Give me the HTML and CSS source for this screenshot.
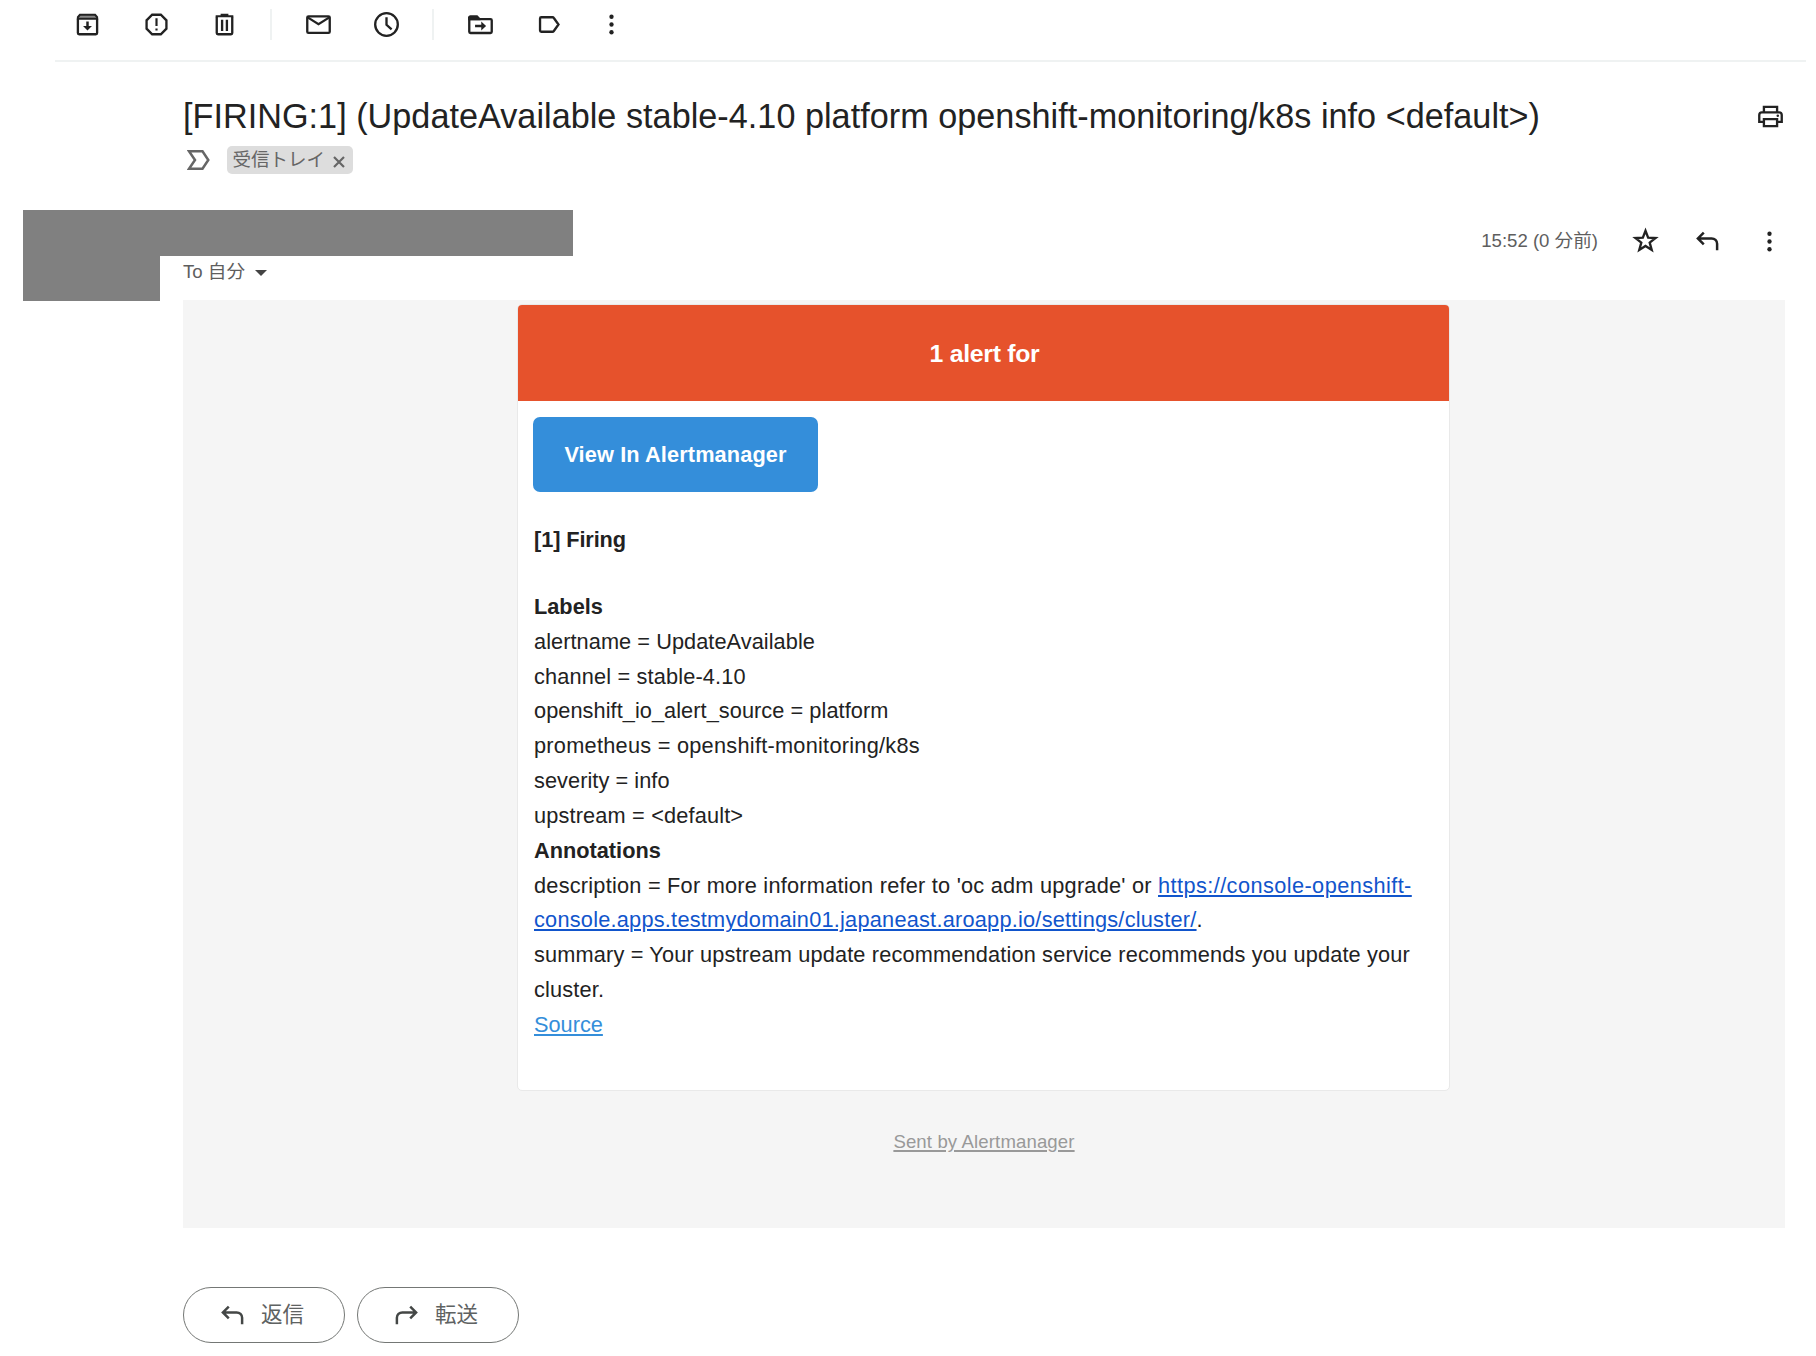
FILE: index.html
```html
<!DOCTYPE html>
<html lang="ja">
<head>
<meta charset="utf-8">
<title>[FIRING:1] UpdateAvailable</title>
<link rel="stylesheet" href="styles.css">
</head>
<body>
<svg class="defs" width="0" height="0">
  <symbol id="reply" viewBox="0 0 20 20"><path d="M7.600 4.200 3.800 8l3.800 3.800M4 8h8.700a3.500 3.500 0 0 1 3.500 3.500v4.100" fill="none" stroke="currentColor" stroke-width="1.600"/></symbol>
  <symbol id="more" viewBox="0 0 20 20"><circle cx="10" cy="5" r="1.400"/><circle cx="10" cy="10" r="1.400"/><circle cx="10" cy="15" r="1.400"/></symbol>
</svg>
<header class="toolbar">
  <svg class="icon archive" viewBox="0 0 20 20"><path d="M3.800 6.200v9.300c0 .5.300.8.800.8h10.800c.5 0 .8-.3.800-.8V6.200" class="line"/><path d="M3.800 6.300V5.200l1.300-1.500h9.800l1.300 1.500v1.100z" fill="#888" class="edge"/><path d="M9.200 8h1.600v3h2.100L10 13.900 7.100 11h2.100z"/></svg>
  <svg class="icon spam" viewBox="0 0 20 20"><path d="M7.200 3.700h5.600l3.600 3.600v5.400l-3.600 3.600H7.200l-3.600-3.600V7.300z" class="line"/><path d="M9.300 6h1.400v5H9.300zM9.300 12.500h1.400v1.400H9.300z"/></svg>
  <svg class="icon trash" viewBox="0 0 20 20"><path d="M5 5v10.500c0 .5.300.8.800.8h8.400c.5 0 .8-.3.800-.8V5" class="line"/><path d="M4.300 4H7.500V3h5v1h3.200v1.400H4.300z"/><path d="M7.700 7h1.500v7.200H7.700zM10.800 7h1.500v7.200h-1.500z"/></svg>
  <i class="divider"></i>
  <svg class="icon mail" viewBox="0 0 20 20"><rect x="2.750" y="4.750" width="14.500" height="10.700" rx=".8" class="line"/><path d="M3 5.400 10 9.800l7-4.400" class="line"/></svg>
  <svg class="icon clock" viewBox="0 0 20 20"><circle cx="10" cy="10" r="7.300" class="line"/><path d="M10 5.300V10.200l3.300 3" class="line"/></svg>
  <i class="divider"></i>
  <svg class="icon folder" viewBox="0 0 20 20"><path d="M2.750 5.200v9.500c0 .5.300.8.800.8h12.900c.5 0 .8-.3.800-.8V7.300c0-.5-.3-.8-.8-.8H2.750" class="line"/><path d="M2 5.500C2 4.600 2.600 4 3.500 4H8l2 2.200v1H2z"/><path d="M6.500 10.200h4V8.100l3.100 2.900-3.100 2.900v-2.100h-4z"/></svg>
  <svg class="icon tag" viewBox="0 0 20 20"><path d="M4.700 5.300h7.200c.4 0 .7.200.9.500l3 4.200-3 4.200c-.2.300-.5.500-.9.500H4.700c-.4 0-.8-.3-.8-.8V6.100c0-.5.400-.8.800-.8z" class="line"/></svg>
  <svg class="icon more"><use href="#more"/></svg>
</header>

<main class="thread">
  <section class="subject-row">
    <div class="subject">
      <h1>[FIRING:1] (UpdateAvailable stable-4.10 platform openshift-monitoring/k8s info &lt;default&gt;)</h1>
      <div class="tags">
        <svg class="importance" viewBox="0 0 23 20"><path d="M2 1.300h13.500L21.300 10l-5.800 8.700H2L8 10z" fill="none" stroke="#666" stroke-width="2.500"/></svg>
        <span class="chip"><span>受信トレイ</span><svg viewBox="0 0 12 12"><path d="M1 1l10 10M11 1 1 11" stroke="#666" stroke-width="2.200"/></svg></span>
      </div>
    </div>
    <svg class="icon print" viewBox="0 0 20 20"><path d="M5.750 7V3.750h8.500V7M5.500 13.500H2.750V9c0-1 .8-1.700 1.700-1.700h11.100c1 0 1.700.7 1.700 1.700v4.500H14.500M5.750 11.700h8.500v4.550h-8.500z" class="line"/><circle cx="14.700" cy="9.500" r=".8"/></svg>
  </section>

  <section class="meta">
    <div class="avatar"></div>
    <div class="from">
      <div class="name"></div>
      <div class="to"><span>To 自分</span><i class="caret"></i></div>
    </div>
    <div class="actions">
      <time>15:52 (0 分前)</time>
      <svg class="icon star" viewBox="0 0 20 20"><path d="m10 3.700 1.700 4.500 4.800.2-3.800 3 1.300 4.700L10 13.500l-4 2.600 1.300-4.700-3.800-3 4.800-.2z" class="line"/></svg>
      <svg class="icon reply"><use href="#reply"/></svg>
      <svg class="icon more"><use href="#more"/></svg>
    </div>
  </section>

  <section class="mail">
    <article class="card">
      <h2>1 alert for</h2>
      <div class="content">
        <a class="button"><span>View In Alertmanager</span></a>
        <p class="firing"><b>[1] Firing</b></p>
        <div class="details">
          <p><b>Labels</b></p>
          <p class="sp-1">alertname = UpdateAvailable</p>
          <p class="sp-2">channel = stable-4.10</p>
          <p class="sp-1">openshift_io_alert_source = platform</p>
          <p class="sp-4">prometheus = openshift-monitoring/k8s</p>
          <p class="sp-1">severity = info</p>
          <p class="sp-2">upstream = &lt;default&gt;</p>
          <p><b>Annotations</b></p>
          <p class="sp-3">description = For more information refer to 'oc adm upgrade' or <a class="url"><span class="sp-5">https://console-openshift-</span><br>console.apps.testmydomain01.japaneast.aroapp.io/settings/cluster/</a>.</p>
          <p class="sp-2">summary = Your upstream update recommendation service recommends you update your<br>cluster.</p>
          <p><a class="source">Source</a></p>
        </div>
      </div>
    </article>
    <footer><a>Sent by Alertmanager</a></footer>
  </section>

  <section class="replies">
    <button><svg class="icon"><use href="#reply"/></svg><span>返信</span></button>
    <button><svg class="icon flip"><use href="#reply"/></svg><span>転送</span></button>
  </section>
</main>
</body>
</html>
```
FILE: styles.css
```css
* { box-sizing: border-box; }
body {
  margin: 0;
  width: 1816px;
  height: 1356px;
  overflow: hidden;
  background: #fff;
  color: #222;
  font-family: "Liberation Sans", "Noto Sans CJK JP", sans-serif;
}
h1, h2, p { margin: 0; font-weight: 400; }
.defs { display: block; position: absolute; }
.icon { width: 31px; height: 31px; flex: none; fill: currentColor; color: #222; }
.line { fill: none; stroke: currentColor; stroke-width: 1.5; }
.edge { stroke: currentColor; stroke-width: 1.3; }

.toolbar {
  display: flex;
  align-items: center;
  height: 62px;
  margin: 0 10px 0 55px;
  padding: 0 0 11px 17px;
  border-bottom: 2px solid #eff2f2;
}
.spam { margin-left: 38px; }
.trash { margin-left: 37px; }
.divider { width: 2px; height: 31px; background: #eff2f2; margin-left: 30px; }
.mail.icon { margin-left: 31px; }
.clock { margin-left: 37px; }
.folder { margin-left: 31px; }
.tag { margin-left: 38px; }
.toolbar .more { margin-left: 31px; }

.subject-row { display: flex; justify-content: space-between; height: 148px; padding: 38px 30.5px 0 183px; }
.subject-row h1 { font-size: 34.2px; line-height: 32px; white-space: nowrap; letter-spacing: 0.03px; }
.print { margin-top: 1px; }
.tags { display: flex; align-items: center; gap: 16.5px; margin-top: 14px; padding-left: 4px; }
.importance { width: 23px; height: 20px; }
.chip {
  display: flex;
  align-items: center;
  gap: 8px;
  height: 28px;
  width: 126px;
  padding: 0 0 0 6px;
  border-radius: 5px;
  background: #ddd;
  color: #666;
  font-size: 18.5px;
  line-height: 24px;
  white-space: nowrap;
}
.chip span { margin-bottom: 1px; }
.chip svg { width: 12px; height: 12px; margin-top: 3px; }

.meta { display: flex; height: 90px; padding-left: 23px; }
.avatar { width: 137px; height: 91px; background: #808080; }
.from { width: 413px; }
.name { height: 46px; background: #808080; }
.to { display: flex; align-items: center; gap: 10px; height: 30px; padding-left: 23px; color: #5e5e5e; font-size: 18.6px; line-height: 26px; }
.to span { margin-top: 1px; }
.caret { border: 6px solid transparent; border-top-color: #444; border-bottom: 0; margin-top: 3px; }
.actions { display: flex; flex: 1; align-items: center; justify-content: flex-end; height: 62px; padding-right: 31px; color: #5e5e5e; }
.actions time { font-size: 18.6px; white-space: nowrap; margin: 0 32px 5px 0; }
.actions .star { margin-bottom: 1px; }
.actions .reply { margin: 0 31px 0 31px; }

.thread .mail { height: 928px; margin: 0 31px 0 183px; padding: 4px 0 0 334px; background: #f5f5f5; }
.card { width: 933px; height: 787px; border: 1px solid #e9e9e9; border-radius: 5px; background: #fff; overflow: hidden; }
.card h2 { height: 96px; padding-left: 2px; background: #e6522c; color: #fff; font-size: 24.8px; font-weight: 700; line-height: 97px; text-align: center; letter-spacing: -0.28px; }
.content { padding: 16px 16px 0; font-size: 21.74px; line-height: 34.85px; }
.content p { white-space: nowrap; }
.button { display: flex; width: 285px; height: 75px; margin-left: -1px; padding-top: 1px; align-items: center; justify-content: center; border-radius: 7px; background: #348eda; color: #fff; font-weight: 700; letter-spacing: 0.12px; white-space: nowrap; }
.firing { margin-top: 31px; letter-spacing: -0.1px; }
.details { margin-top: 32px; }
.sp-1 { letter-spacing: 0.06px; }
.sp-2 { letter-spacing: 0.16px; }
.sp-3 { letter-spacing: 0.23px; }
.sp-4 { letter-spacing: 0.26px; }
.sp-5 { letter-spacing: 0.42px; }
.url, .source, footer a { text-decoration: underline; text-decoration-thickness: 1.5px; text-underline-offset: 2px; }
.url { color: #15c; }
.source { color: #348eda; }
footer { width: 933px; padding: 39px 0 0 1px; color: #999; font-size: 18.6px; line-height: 24px; text-align: center; letter-spacing: 0.12px; }

.replies { display: flex; gap: 12px; padding: 59px 0 0 183px; }
.replies button { display: flex; align-items: center; width: 162px; height: 56px; padding: 0 0 0 33px; gap: 13px; border: 1.5px solid #747775; border-radius: 28px; background: none; color: #5e6262; font-family: inherit; font-size: 21.5px; }
.replies span { margin-bottom: 5px; }
.replies .icon { color: #444746; }
.flip { transform: scaleX(-1); }
```
